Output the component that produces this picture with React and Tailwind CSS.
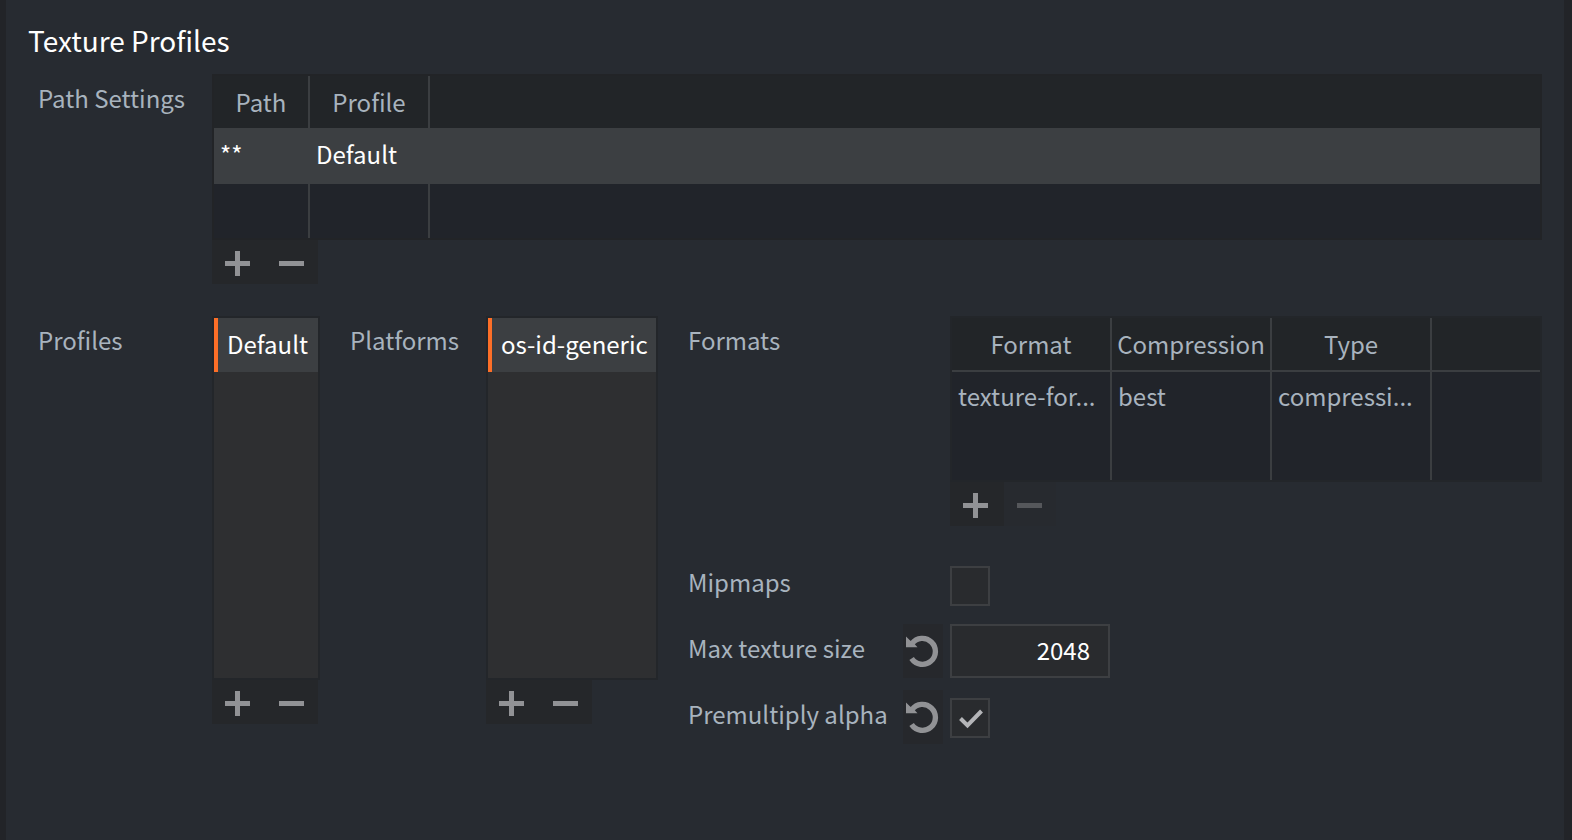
import { useState } from "react";

function PlusIcon() {
  return (
    <svg width="25" height="25" viewBox="0 0 25 25" fill="currentColor" aria-hidden="true">
      <path d="M10 0h5v10h10v5H15v10h-5V15H0v-5h10z" />
    </svg>
  );
}

function MinusIcon() {
  return (
    <svg width="25" height="25" viewBox="0 0 25 25" fill="currentColor" aria-hidden="true">
      <path d="M0 10h25v5H0z" />
    </svg>
  );
}

function ResetIcon() {
  return (
    <svg width="34" height="34" viewBox="0 0 34 34" aria-hidden="true">
      <path d="M5.6 24.6A13 13 0 1 0 6 9.6" fill="none" stroke="currentColor" strokeWidth="5.4" />
      <path d="M0 2.5L3.6 6L9 10.5L11.5 13.2H0z" fill="currentColor" />
    </svg>
  );
}

function AddRemove({ name, canRemove = true }) {
  return (
    <div className="flex">
      <button type="button" aria-label={`Add ${name}`} className="flex h-11 w-[54px] bg-[#25272a] pt-[11px] pl-[13px] text-[#919295]">
        <PlusIcon />
      </button>
      <button
        type="button"
        aria-label={`Remove ${name}`}
        disabled={!canRemove}
        className="flex h-11 w-[52px] bg-[#25272a] pt-[11px] pl-[13px] text-[#919295] disabled:bg-[#272a2f] disabled:text-[#55575b]"
      >
        <MinusIcon />
      </button>
    </div>
  );
}

function ListPanel({ label, name, items }) {
  return (
    <div>
      <div role="listbox" aria-label={label} className="h-[364px] border-2 border-[#23262a] bg-[#2e2f31]">
        {items.map((item) => (
          <button
            key={item}
            type="button"
            role="option"
            aria-selected="true"
            className="block h-[54px] w-full border-l-4 border-[#fd6f28] bg-[#3c3f42] pb-0.5 pl-[9px] text-left whitespace-nowrap text-white"
          >
            {item}
          </button>
        ))}
      </div>
      <AddRemove name={name} />
    </div>
  );
}

function ResetButton({ name }) {
  return (
    <button type="button" aria-label={`Reset ${name}`} className="mr-[7px] flex h-[54px] w-10 shrink-0 items-center justify-center bg-[#26282c] text-[#919295]">
      <ResetIcon />
    </button>
  );
}

function CheckBox({ id, checked, onChange }) {
  return (
    <span className="mt-2 grid size-10 place-items-center">
      <input
        id={id}
        type="checkbox"
        checked={checked}
        onChange={(e) => onChange(e.target.checked)}
        className="col-start-1 row-start-1 size-10 appearance-none border-2 border-[#3d3f42] bg-[#292b2e]"
      />
      {checked && (
        <svg width="40" height="40" viewBox="0 0 40 40" className="pointer-events-none col-start-1 row-start-1" aria-hidden="true">
          <path d="M10.5 20.5L17.5 27.5L31.5 13" fill="none" stroke="#b4b5b8" strokeWidth="4" />
        </svg>
      )}
    </span>
  );
}

const label = "w-full pt-2 whitespace-nowrap text-[#a8b3be]";
const line = "border-r-2 border-[#3b3e41]";

export default function App() {
  const [mipmaps, setMipmaps] = useState(false);
  const [premultiply, setPremultiply] = useState(true);
  const [size, setSize] = useState("2048");

  return (
    <main className="min-h-screen border-r-8 border-l-[6px] border-[#222428] bg-[#272b31] pt-5 pr-[22px] pl-8 font-['Noto_Sans_CJK_SC',sans-serif] text-[24px] leading-8">
      <h1 className="-ml-2.5 text-[28px] leading-10 text-white">Texture Profiles</h1>

      <section className="mt-3.5 grid grid-cols-[174px_1fr]">
        <h2 className={label}>Path Settings</h2>
        <div>
          <div className="border-2 border-[#222427] bg-[#21242a]">
            <table className="w-full table-fixed border-separate border-spacing-0">
              <colgroup>
                <col className="w-24" />
                <col className="w-[120px]" />
                <col />
              </colgroup>
              <thead>
                <tr className="h-[52px] bg-[#222528] text-[#a8b3be]">
                  <th className={`${line} p-0 font-normal`}>Path</th>
                  <th className={`${line} p-0 font-normal`}>Profile</th>
                  <td />
                </tr>
              </thead>
              <tbody>
                <tr className="h-14 bg-[#3c3f42] align-top text-white">
                  <td className="px-1.5 pt-2.5">**</td>
                  <td className="px-1.5 pt-2.5">Default</td>
                  <td />
                </tr>
                <tr className="h-[54px]">
                  <td className={line} />
                  <td className={line} />
                  <td />
                </tr>
              </tbody>
            </table>
          </div>
          <AddRemove name="path" />
        </div>
      </section>

      <section className="mt-8 grid grid-cols-[174px_108px_30px_136px_172px_30px_1fr]">
        <h2 className={label}>Profiles</h2>
        <ListPanel label="Profiles" name="profile" items={["Default"]} />
        <h2 className={`${label} col-start-4`}>Platforms</h2>
        <ListPanel label="Platforms" name="platform" items={["os-id-generic"]} />

        <div className="col-start-7 grid grid-cols-[262px_1fr] content-start gap-y-3">
          <h2 className={label}>Formats</h2>
          <div className="mb-5">
            <div className="border-2 border-[#23262a] bg-[#21242a] text-[#a8b3be]">
              <table className="w-full table-fixed border-separate border-spacing-0">
                <colgroup>
                  <col className="w-40" />
                  <col className="w-40" />
                  <col className="w-40" />
                  <col />
                </colgroup>
                <thead>
                  <tr className="h-[54px] bg-[#222528]">
                    <th className={`${line} border-b-2 p-0 font-normal`}>Format</th>
                    <th className={`${line} border-b-2 p-0 font-normal`}>Compression</th>
                    <th className={`${line} border-b-2 p-0 font-normal`}>Type</th>
                    <td className="border-b-2 border-[#3b3e41]" />
                  </tr>
                </thead>
                <tbody>
                  <tr className="h-[54px] align-top">
                    <td className={`${line} px-1.5 pt-2`}>texture-for...</td>
                    <td className={`${line} px-1.5 pt-2`}>best</td>
                    <td className={`${line} px-1.5 pt-2`}>compressi...</td>
                    <td />
                  </tr>
                  <tr className="h-[54px]">
                    <td className={line} />
                    <td className={line} />
                    <td className={line} />
                    <td />
                  </tr>
                </tbody>
              </table>
            </div>
            <AddRemove name="format" canRemove={false} />
          </div>

          <div className="flex h-[54px]">
            <label htmlFor="mipmaps" className={label}>Mipmaps</label>
          </div>
          <CheckBox id="mipmaps" checked={mipmaps} onChange={setMipmaps} />

          <div className="flex h-[54px]">
            <label htmlFor="max-size" className={label}>Max texture size</label>
            <ResetButton name="max texture size" />
          </div>
          <input
            id="max-size"
            type="text"
            inputMode="numeric"
            value={size}
            onChange={(e) => setSize(e.target.value)}
            className="h-[54px] w-40 border-2 border-[#3d3f42] bg-[#292b2e] pr-[18px] pb-1 text-right text-white"
          />

          <div className="flex h-[54px]">
            <label htmlFor="premultiply" className={label}>Premultiply alpha</label>
            <ResetButton name="premultiply alpha" />
          </div>
          <CheckBox id="premultiply" checked={premultiply} onChange={setPremultiply} />
        </div>
      </section>
    </main>
  );
}
